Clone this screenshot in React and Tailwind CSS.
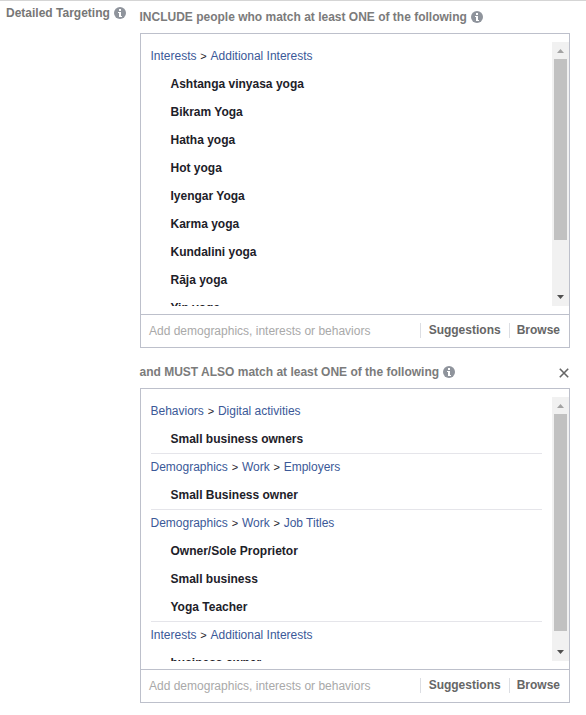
const includeGroups = [
  {
    path: ['Interests', 'Additional Interests'],
    items: [
      'Ashtanga vinyasa yoga',
      'Bikram Yoga',
      'Hatha yoga',
      'Hot yoga',
      'Iyengar Yoga',
      'Karma yoga',
      'Kundalini yoga',
      'Rāja yoga',
      'Yin yoga',
    ],
  },
];

const narrowGroups = [
  { path: ['Behaviors', 'Digital activities'], items: ['Small business owners'] },
  { path: ['Demographics', 'Work', 'Employers'], items: ['Small Business owner'] },
  {
    path: ['Demographics', 'Work', 'Job Titles'],
    items: ['Owner/Sole Proprietor', 'Small business', 'Yoga Teacher'],
  },
  { path: ['Interests', 'Additional Interests'], items: ['business owner'] },
];

const InfoIcon = () => (
  <svg viewBox="0 0 12 12" className="ml-1 h-3 w-3 shrink-0">
    <circle cx="6" cy="6" r="6" fill="#8f949c" />
    <path d="M5 2h2v2H5zM4 5h3v4h1v1H5V6H4z" fill="#fff" />
  </svg>
);

const Scrollbar = ({ thumbClass }) => (
  <div className="flex w-[17px] shrink-0 flex-col items-center bg-[#f1f1f1]">
    <svg viewBox="0 0 17 17" className="h-[17px] w-[17px] shrink-0">
      <path d="M5 11h7L8.5 7z" fill="#a3a3a3" />
    </svg>
    <div className={`w-[13px] bg-[#c1c1c1] ${thumbClass}`} />
    <svg viewBox="0 0 17 17" className="mt-auto h-[17px] w-[17px] shrink-0">
      <path d="M5 6h7L8.5 10z" fill="#505050" />
    </svg>
  </div>
);

// Breadcrumb row followed by the selected entries
const Group = ({ path, items }) => (
  <div className="border-t border-[#e5e5ea] first:border-t-0 [&:not(:first-child)>*:first-child]:-mt-px">
    <div className="-ml-[0.5px] flex h-7 items-center text-[#3b5998]">
      {path.map((name, i) => (
        <span key={name} className="flex items-center">
          {i > 0 && <span className="w-[14px] text-center text-[11px] text-[#1d2129]">&gt;</span>}
          {name}
        </span>
      ))}
    </div>
    {items.map((item) => (
      <div key={item} className="-ml-[0.5px] flex h-7 items-center pl-5 font-bold text-[#1d2129]">
        {item}
      </div>
    ))}
  </div>
);

const TargetingBox = ({ groups, thumbClass }) => (
  <div className="w-[430px] border border-[#bdc0cb]">
    <div className="my-2 flex h-[264px] overflow-hidden">
      <div className="min-w-0 flex-1 overflow-hidden px-2.5">
        {groups.map((group) => (
          <Group key={group.path.join()} {...group} />
        ))}
      </div>
      <Scrollbar thumbClass={thumbClass} />
    </div>
    <div className="flex h-[33px] items-center border-t border-[#bdc0cb] pr-[9px] pb-px pl-2">
      <span className="flex-1 text-[#a9a9a9]">Add demographics, interests or behaviors</span>
      <span className="flex h-[15px] items-center border-l border-[#dcdee3] pr-[8px] pl-[8px] font-bold text-[#666]">
        <span className="-mt-0.5">Suggestions</span>
      </span>
      <span className="flex h-[15px] items-center border-l border-[#dcdee3] pl-[7px] font-bold text-[#666]">
        <span className="-mt-0.5">Browse</span>
      </span>
    </div>
  </div>
);

export default function App() {
  return (
    <div className="flex h-[715px] w-[586px] overflow-hidden border-t border-[#d5d5d5] bg-white font-['Liberation_Sans',Arial,sans-serif] text-xs">
      <div className="flex h-6 w-[140px] shrink-0 items-center pl-1.5 font-bold text-[#777]">
        Detailed Targeting
        <InfoIcon />
      </div>
      <div className="w-[430px] shrink-0">
        <div className="-ml-[0.5px] flex h-8 items-center font-bold text-[#7b7b7b]">
          INCLUDE people who match at least ONE of the following
          <InfoIcon />
        </div>
        <TargetingBox groups={includeGroups} thumbClass="h-[181px]" />
        <div className="-ml-[0.5px] flex h-10 items-center pt-2 font-bold text-[#7b7b7b]">
          and MUST ALSO match at least ONE of the following
          <InfoIcon />
          <svg viewBox="0 0 10 10" className="mt-0.5 mr-px ml-auto h-2.5 w-2.5">
            <path d="M.8.8l8.4 8.4M9.2.8L.8 9.2" stroke="#666" strokeWidth="1.6" />
          </svg>
        </div>
        <TargetingBox groups={narrowGroups} thumbClass="h-[217px]" />
      </div>
    </div>
  );
}
